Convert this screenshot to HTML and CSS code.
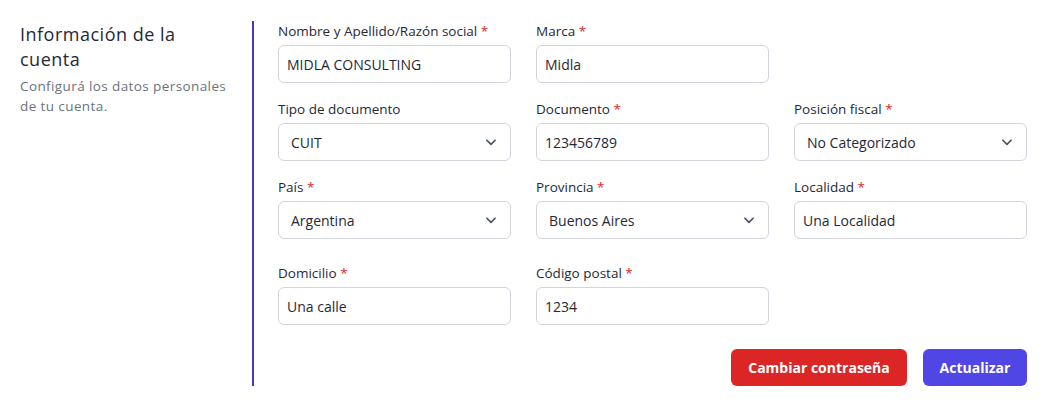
FILE: index.html
```html
<!DOCTYPE html>
<html lang="es">
<head>
<meta charset="utf-8">
<title>Información de la cuenta</title>
<link rel="stylesheet" href="styles.css">
</head>
<body>
<div class="page">
  <aside class="intro">
    <h2 class="intro-title">Información de la cuenta</h2>
    <p class="intro-text">Configurá los datos personales de tu cuenta.</p>
  </aside>
  <form class="form">
    <div class="grid">
      <div class="field">
        <label class="label">Nombre y Apellido/Razón social <span class="req">*</span></label>
        <div class="input">MIDLA CONSULTING</div>
      </div>
      <div class="field">
        <label class="label">Marca <span class="req">*</span></label>
        <div class="input">Midla</div>
      </div>
      <div class="field empty"></div>

      <div class="field">
        <label class="label">Tipo de documento</label>
        <div class="input select"><span>CUIT</span><svg class="chev" viewBox="0 0 12 12"><path d="M2.5 4.5 L6 8 L9.5 4.5"/></svg></div>
      </div>
      <div class="field">
        <label class="label">Documento <span class="req">*</span></label>
        <div class="input">123456789</div>
      </div>
      <div class="field">
        <label class="label">Posición fiscal <span class="req">*</span></label>
        <div class="input select"><span>No Categorizado</span><svg class="chev" viewBox="0 0 12 12"><path d="M2.5 4.5 L6 8 L9.5 4.5"/></svg></div>
      </div>

      <div class="field">
        <label class="label">País <span class="req">*</span></label>
        <div class="input select"><span>Argentina</span><svg class="chev" viewBox="0 0 12 12"><path d="M2.5 4.5 L6 8 L9.5 4.5"/></svg></div>
      </div>
      <div class="field">
        <label class="label">Provincia <span class="req">*</span></label>
        <div class="input select"><span>Buenos Aires</span><svg class="chev" viewBox="0 0 12 12"><path d="M2.5 4.5 L6 8 L9.5 4.5"/></svg></div>
      </div>
      <div class="field">
        <label class="label">Localidad <span class="req">*</span></label>
        <div class="input">Una Localidad</div>
      </div>
    </div>
    <div class="grid grid-address">
      <div class="field">
        <label class="label">Domicilio <span class="req">*</span></label>
        <div class="input">Una calle</div>
      </div>
      <div class="field">
        <label class="label">Código postal <span class="req">*</span></label>
        <div class="input">1234</div>
      </div>
    </div>
    <div class="actions">
      <button type="button" class="btn btn-red">Cambiar contraseña</button>
      <button type="button" class="btn btn-indigo">Actualizar</button>
    </div>
  </form>
</div>
</body>
</html>
```

FILE: styles.css
```css
* { box-sizing: border-box; }
html, body { margin: 0; padding: 0; background: #ffffff; }
body {
  font-family: "Open Sans", "Noto Sans", "Liberation Sans", sans-serif;
  color: #1f2937;
}
.page {
  display: flex;
  padding: 21px 18px 21px 20px;
}
.intro {
  width: 232px;
  flex: none;
  padding-right: 16px;
  margin-top: 1px;
}
.intro-title {
  margin: 0;
  font-size: 18px;
  line-height: 25px;
  font-weight: 500;
  letter-spacing: 0.5px;
  color: #1f2937;
}
.intro-text {
  margin: 4px 0 0;
  font-size: 13.5px;
  line-height: 20px;
  letter-spacing: 0.4px;
  color: #6b7280;
}
.form {
  flex: 1;
  border-left: 2px solid #4338ca;
  padding-left: 24px;
  display: flex;
  flex-direction: column;
}
.grid {
  display: grid;
  grid-template-columns: repeat(3, 233px);
  column-gap: 25px;
  row-gap: 16px;
}
.grid-address { margin-top: 24px; }
.field { display: flex; flex-direction: column; }
.label {
  font-size: 13.5px;
  line-height: 20px;
  font-weight: 500;
  color: #1f2937;
  margin-bottom: 4px;
}
.req { color: #dc2626; }
.input {
  height: 38px;
  border: 1px solid #d1d5db;
  border-radius: 6px;
  padding: 0 9px 0 8px;
  display: flex;
  align-items: center;
  font-size: 14px;
  color: #1f2937;
}
.select {
  justify-content: space-between;
  padding: 0 12px 0 12px;
}
.chev {
  width: 14px;
  height: 14px;
  fill: none;
  stroke: #4b5563;
  stroke-width: 1.5;
  stroke-linecap: round;
  stroke-linejoin: round;
}
.actions {
  display: flex;
  justify-content: flex-end;
  gap: 16px;
  margin-top: 24px;
}
.btn {
  height: 37px;
  border: none;
  border-radius: 6px;
  font-family: inherit;
  font-size: 14px;
  font-weight: 700;
  color: #ffffff;
  cursor: pointer;
}
.btn-red { background: #dc2626; width: 176px; }
.btn-indigo { background: #4f46e5; width: 104px; }
```
